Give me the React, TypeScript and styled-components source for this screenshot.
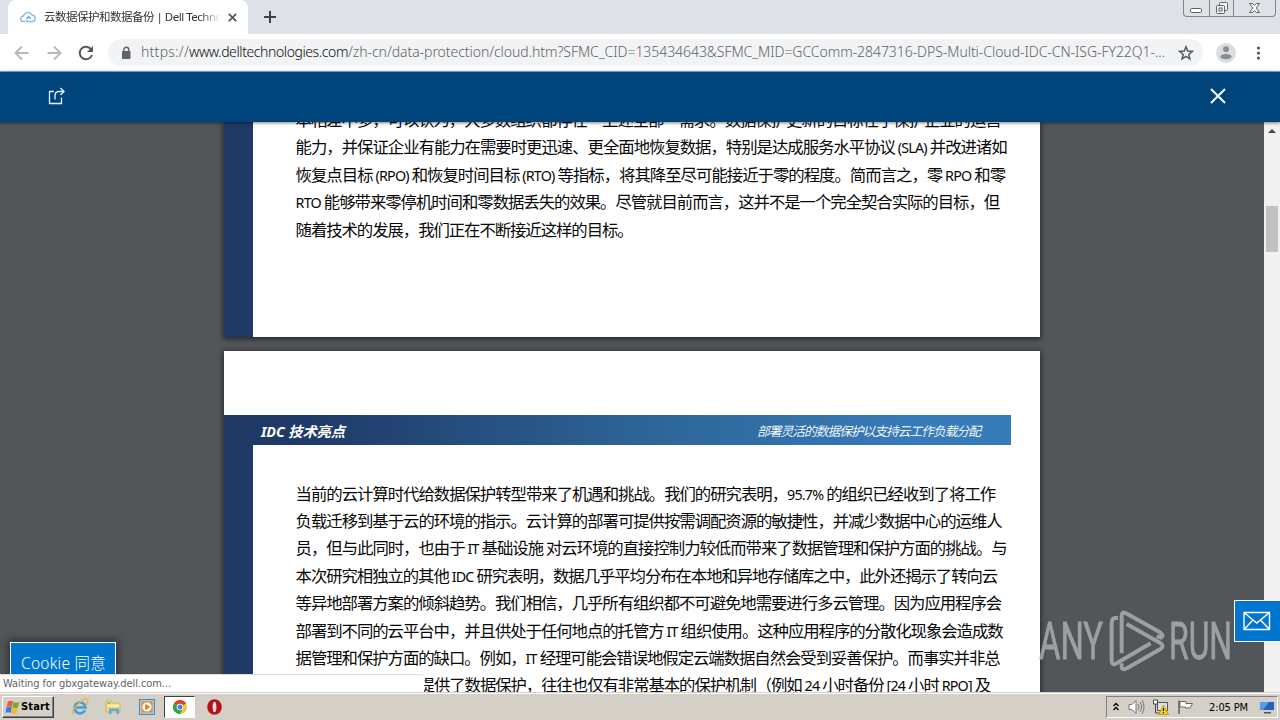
import React, { useLayoutEffect, useRef } from "react";
import styled, { createGlobalStyle } from "styled-components";

const Global = createGlobalStyle`
  * { box-sizing: border-box; }
  html, body { margin: 0; padding: 0; overflow: hidden; }
  svg { display: block; flex: none; }
`;

const cjk = `"Noto Sans CJK SC", sans-serif`;

/* ---------- text fitted to a measure ---------- */

const FitBox = styled.span`
  display: inline-block;
  white-space: pre;
`;

const LatinRun = styled.span`
  font-size: 14.3px;
  letter-spacing: -0.8px;
`;

function Fit({ width, mixed, children }: { width: number; mixed?: boolean; children: string }) {
  const ref = useRef<HTMLSpanElement>(null);
  const parts = mixed ? children.split(/([\x20-\x7e]+)/).filter(Boolean) : [children];
  const isLatin = (s: string) => /^[\x20-\x7e]+$/.test(s);
  useLayoutEffect(() => {
    const el = ref.current;
    if (!el) return;
    el.style.letterSpacing = "0px";
    const natural = el.getBoundingClientRect().width;
    const count = mixed
      ? parts.filter((p) => !isLatin(p)).join("").length
      : children.length;
    el.style.letterSpacing = `${(width - natural) / count}px`;
  }, [width, children]);
  return (
    <FitBox ref={ref}>
      {mixed ? parts.map((p, i) => (isLatin(p) ? <LatinRun key={i}>{p}</LatinRun> : p)) : children}
    </FitBox>
  );
}

/* ---------- browser chrome ---------- */

const Screen = styled.div`
  position: relative;
  width: 1280px;
  height: 720px;
  display: flex;
  flex-direction: column;
  overflow: hidden;
  font-family: "DejaVu Sans Condensed", ${cjk};
`;

const TabStrip = styled.div`
  height: 34px;
  flex: none;
  background: #dee1e6;
  display: flex;
  padding-left: 8px;
`;

const Tab = styled.div`
  width: 240px;
  height: 34px;
  background: #fff;
  border-radius: 8px 8px 0 0;
  display: flex;
  align-items: center;
  padding: 0 10px 0 12px;
`;

const TabTitle = styled.div`
  width: 177px;
  margin: 0 7px 0 8px;
  overflow: hidden;
  white-space: nowrap;
  font: 11.5px/18px "Noto Sans", ${cjk};
  color: #303236;
  mask-image: linear-gradient(90deg, #000 88%, transparent);
`;

const NewTab = styled.div`
  padding: 11px 0 0 16px;
`;

const WindowButtons = styled.div`
  margin: 0 4px 0 auto;
  width: 93px;
  height: 17px;
  display: flex;
  border: 1px solid #80858c;
  border-top: 0;
  border-radius: 0 0 4px 4px;
`;

const WindowButton = styled.div<{ $w: number }>`
  width: ${(p) => p.$w}px;
  display: flex;
  justify-content: center;
  & + & { border-left: 1px solid #80858c; }
`;

const Toolbar = styled.div`
  height: 37px;
  flex: none;
  background: #fff;
  display: flex;
  align-items: center;
  padding-left: 14px;
`;

const NavIcons = styled.div`
  display: flex;
  gap: 16px;
  width: 94px;
`;

const Omnibox = styled.div`
  width: 1095px;
  height: 27px;
  border-radius: 14px;
  background: #f1f3f4;
  display: flex;
  align-items: center;
  padding-left: 12px;
  font: 300 14px/26px "Noto Sans", ${cjk};
  color: #5f6368;
`;

const Url = styled.div`
  display: flex;
  margin: 0 13px 2px 9px;
`;

const Host = styled.span`
  color: #0c0d0f;
`;

const ToolbarEnd = styled.div`
  display: flex;
  align-items: center;
  gap: 12px;
  margin-left: 13px;
`;

/* ---------- site header and document viewer ---------- */

const SiteHeader = styled.header`
  position: relative;
  z-index: 1;
  height: 51px;
  flex: none;
  background: #00447c;
  border-top: 1px solid #6e9cbc;
  box-shadow: 0 1px 3px rgba(0, 0, 0, 0.5);
  display: flex;
  align-items: center;
  justify-content: space-between;
  padding: 0 54px 2px 48px;
`;

const Viewer = styled.main`
  height: 570px;
  flex: none;
  display: flex;
  background: #525659;
  overflow: hidden;
`;

const Pages = styled.div`
  width: 1264px;
  height: 570px;
  display: flex;
  flex-direction: column;
  gap: 14px;
  padding-left: 224px;
  overflow: hidden;
`;

const Page = styled.section<{ $h: number }>`
  width: 816px;
  height: ${(p) => p.$h}px;
  flex: none;
  background: #fff;
  box-shadow: 0 1px 5px 1px rgba(0, 0, 0, 0.55);
  display: flex;
  flex-direction: column;
`;

const PageBody = styled.div`
  flex: 1;
  min-height: 0;
  border-left: 29px solid #1f3864;
  padding-left: 42.6px;
`;

const Band = styled.div`
  margin-top: 64px;
  width: 787px;
  height: 30px;
  flex: none;
  display: flex;
  align-items: center;
  justify-content: space-between;
  padding: 0 31px 0 37px;
  background: linear-gradient(90deg, #1f3864 0%, #203b69 12%, #2e6699 55%, #377bb8 88%, #377bb8 100%);
  color: #fff;
  font-family: "Noto Sans", ${cjk};
  font-style: italic;
`;

const BandTitle = styled.div`
  font-size: 14.3px;
  line-height: 30px;
  font-weight: 700;
  padding-top: 3px;
`;

const BandNote = styled.div`
  font-size: 12.8px;
  line-height: 30px;
  font-weight: 350;
  padding-top: 1px;
`;

const Paragraph = styled.div<{ $top: number }>`
  margin-top: ${(p) => p.$top}px;
`;

const Line = styled.div<{ $indent?: number }>`
  height: 27.4px;
  padding-left: ${(p) => p.$indent ?? 0}px;
  font: 16.4px/27.4px "Noto Sans", ${cjk};
  color: #080808;
  white-space: nowrap;
`;

const ScrollTrack = styled.div`
  width: 16px;
  background: #f1f1f1;
  display: flex;
  flex-direction: column;
  align-items: center;
`;

const ScrollArrow = styled.div`
  margin-top: 7px;
  border: 4px solid transparent;
  border-top: 0;
  border-bottom: 4px solid #454545;
`;

const ScrollThumb = styled.div`
  margin-top: 73px;
  width: 12px;
  height: 46px;
  background: #c1c1c1;
`;

/* ---------- overlays ---------- */

const CookieButton = styled.div`
  position: absolute;
  left: 10px;
  top: 642px;
  width: 106px;
  height: 40px;
  border: 1px solid #fff;
  background: #0076ce;
  box-shadow: 0 0 8px 2px rgba(0, 0, 0, 0.45);
  color: #fff;
  padding-left: 10px;
  font: 300 15.5px/41px "Noto Sans", ${cjk};
`;

const StatusBubble = styled.div`
  position: absolute;
  left: 0;
  top: 674px;
  width: 424px;
  height: 18px;
  border-top: 1px solid #dcdcdc;
  border-top-right-radius: 3px;
  background: #fff;
  padding-left: 3px;
  color: #5f6368;
  font-size: 11px;
  line-height: 17px;
`;

const MailButton = styled.div`
  position: absolute;
  left: 1234px;
  top: 600px;
  width: 47px;
  height: 42px;
  border: 1px solid #fff;
  background: #0076ce;
  display: flex;
  align-items: center;
  padding-left: 8px;
`;

const Watermark = styled.svg`
  position: absolute;
  left: 1030px;
  top: 600px;
`;

/* ---------- taskbar ---------- */

const Taskbar = styled.footer`
  height: 28px;
  flex: none;
  background: #d4d0c8;
  box-shadow: inset 0 1px #d4d0c8, inset 0 2px #fff;
  display: flex;
  align-items: center;
  padding: 2px 2px 0 2px;
  z-index: 2;
`;

const StartButton = styled.div`
  width: 52px;
  height: 22px;
  border: 1px solid;
  border-color: #fff #404040 #404040 #fff;
  box-shadow: inset -1px -1px #808080;
  display: flex;
  align-items: center;
  gap: 1px;
  padding-left: 2px;
  font: 700 11px/20px "DejaVu Sans Condensed", sans-serif;
  color: #000;
`;

const TaskSlot = styled.div<{ $w: number; $on?: boolean }>`
  width: ${(p) => p.$w}px;
  height: 22px;
  display: flex;
  align-items: center;
  justify-content: center;
  ${(p) => p.$on && "background:#fff;border:1px solid;border-color:#404040 #fff #fff #404040;"}
`;

const Tray = styled.div`
  margin-left: auto;
  width: 172px;
  height: 22px;
  border: 1px solid;
  border-color: #808080 #fff #fff #808080;
  display: flex;
  align-items: center;
  padding-left: 5px;
  color: #000;
  font-size: 11px;
`;

const TrayIcons = styled.div`
  display: flex;
  align-items: center;
  gap: 7.5px;
  margin-right: 15.5px;
`;

const TrayScreen = styled.div`
  margin-left: 11px;
`;

/* ---------- icons ---------- */

const CloudIcon = () => (
  <svg width="16" height="16" viewBox="0 0 16 16" fill="none" stroke="#8fb9dc" strokeWidth="1.4">
    <path d="M5 12.5H3.4A2.7 2.7 0 0 1 3.5 7 4.6 4.6 0 0 1 12 6a3.3 3.3 0 0 1 .6 6.5H7.2L5.5 11" />
    <path d="M6.5 9.8 8.6 7.7l2 2" stroke="#5fa0d4" />
  </svg>
);

const ArrowIcon = ({ flip }: { flip?: boolean }) => (
  <svg width="16" height="16" viewBox="0 0 16 16" fill="none" stroke="#b6b8ba" strokeWidth="1.8">
    <path d={flip ? "M1.5 8h13M8 1.5 14.5 8 8 14.5" : "M14.5 8h-13M8 1.5 1.5 8 8 14.5"} />
  </svg>
);

const ReloadIcon = () => (
  <svg width="16" height="16" viewBox="0 0 16 16">
    <path d="M13.2 4.3A6.3 6.3 0 1 0 14 10" fill="none" stroke="#55585c" strokeWidth="2" />
    <path d="M15 1v6H9z" fill="#55585c" />
  </svg>
);

const FlagIcon = () => (
  <svg width="15" height="15" viewBox="0 0 14 15">
    <path d="M2.500 1.500q2.500-1.500 5 0L6.500 7Q4 5.500 1 7z" fill="#e8622a" />
    <path d="M8 2q3 1.500 5.800 0L12.500 7.300Q10 9 7 7.300z" fill="#6fae35" />
    <path d="M.8 7.600q3-1.500 5.500 0l-1 5.400q-2.500-1.500-5.300 0z" fill="#3b7fce" />
    <path d="M6.900 7.900q3 1.500 5.500 0l-1 5.400q-2.500 1.500-5.500 0z" fill="#f6b928" />
  </svg>
);

const IeIcon = () => (
  <svg width="18" height="18" viewBox="0 0 18 18" fill="none">
    <path d="M14 12.200A5.500 5.500 0 1 1 14.500 9.500H4.500" stroke="#3f9fe0" strokeWidth="2.600" />
    <path d="M3 16.500Q-.5 14 6 7T16.500 1.500q1.500 1.500-1.500 5" stroke="#e8b53a" strokeWidth="1.300" />
  </svg>
);

const FolderIcon = () => (
  <svg width="16" height="16" viewBox="0 0 16 16">
    <path d="M1 2h5l1 2h8v9H1z" fill="#f0d67c" stroke="#c9a94b" strokeWidth=".7" />
    <path d="M2 5.500h12V8H2z" fill="#faeaa8" />
    <path d="M2.500 3.500h3v1.500h-3z" fill="#7eb765" />
    <path d="M4 15V9.500h10V15h-2.500v-3h-5v3z" fill="#5ea9dc" />
  </svg>
);

const PlayerIcon = () => (
  <svg width="16" height="16" viewBox="0 0 16 16">
    <rect x=".5" y=".5" width="15" height="15" fill="#9ccbee" stroke="#4d87bd" />
    <rect x="2.500" y="2.500" width="11" height="11" fill="#f08c1e" />
    <circle cx="8" cy="8" r="4.600" fill="#fff" />
    <path d="M6.200 4.800v6.400L11.200 8z" fill="#e87511" />
  </svg>
);

const ChromeIcon = () => (
  <svg width="14" height="14" viewBox="0 0 14 14">
    <circle cx="7" cy="7" r="7" fill="#f7c928" />
    <path d="M7 7 .9 3.500A7 7 0 0 1 13.100 3.500z" fill="#e0402f" />
    <path d="M7 7 .9 3.500A7 7 0 0 0 7 14l2-3.500z" fill="#34a24c" />
    <circle cx="7" cy="7" r="3.300" fill="#fff" />
    <circle cx="7" cy="7" r="2.500" fill="#4384ee" />
  </svg>
);

const OperaIcon = () => (
  <svg width="15" height="16" viewBox="0 0 15 16">
    <ellipse cx="7.500" cy="8" rx="7.300" ry="7.800" fill="#b90f17" />
    <ellipse cx="7.500" cy="8" rx="1.900" ry="5.300" fill="#eadada" />
  </svg>
);

const TrayGlyphs = () => (
  <TrayIcons>
    <svg width="8" height="10" viewBox="0 0 8 10" fill="none" stroke="#000" strokeWidth="1.300">
      <path d="m1.500 4 2.500-2.500L6.500 4m-5 4L4 5.500 6.500 8" />
    </svg>
    <svg width="17" height="16" viewBox="0 0 17 16" fill="none" stroke="#77777a">
      <path d="M1 5.500h3l4-4v13l-4-4H1z" fill="#fff" />
      <path d="M10 5q2 3 0 6m2-8q3.500 5 0 10m2-12q4 7 0 14" />
    </svg>
    <svg width="17" height="16" viewBox="0 0 17 16">
      <path d="M5.500 3.500h10v8h-10z" fill="#dfe3e6" stroke="#555" />
      <path d="M1.500 1v4h4V1z" fill="#fff" stroke="#444" />
      <path d="M3.500 5v9h6" fill="none" stroke="#444" />
      <path d="m11.500 6 5 9.500H6.500z" fill="#f5cf18" stroke="#a18606" strokeWidth=".6" />
      <path d="M11.500 9v3m0 1v1.200" stroke="#222" strokeWidth="1.300" />
    </svg>
    <svg width="17" height="16" viewBox="0 0 17 16">
      <path d="M2 1.500v13.500" stroke="#555" strokeWidth="1.400" />
      <path d="M3 2.500h6v2h6.500l-2.500 4.500H8.500v-1H3z" fill="#fff" stroke="#666" />
    </svg>
  </TrayIcons>
);

const firstPage: [string, number][] = [
  ["本相差不多，可以认为，大多数组织都存在一上述全部一需求。数据保护更新的目标在于保护企业的运营", 705],
  ["能力，并保证企业有能力在需要时更迅速、更全面地恢复数据，特别是达成服务水平协议 (SLA) 并改进诸如", 711],
  ["恢复点目标 (RPO) 和恢复时间目标 (RTO) 等指标，将其降至尽可能接近于零的程度。简而言之，零 RPO 和零", 709.5],
  ["RTO 能够带来零停机时间和零数据丢失的效果。尽管就目前而言，这并不是一个完全契合实际的目标，但", 703.5],
  ["随着技术的发展，我们正在不断接近这样的目标。", 337],
];

const secondPage: [string, number, number?][] = [
  ["当前的云计算时代给数据保护转型带来了机遇和挑战。我们的研究表明，95.7% 的组织已经收到了将工作", 699.5],
  ["负载迁移到基于云的环境的指示。云计算的部署可提供按需调配资源的敏捷性，并减少数据中心的运维人", 706],
  ["员，但与此同时，也由于 IT 基础设施 对云环境的直接控制力较低而带来了数据管理和保护方面的挑战。与", 711],
  ["本次研究相独立的其他 IDC 研究表明，数据几乎平均分布在本地和异地存储库之中，此外还揭示了转向云", 701.5],
  ["等异地部署方案的倾斜趋势。我们相信，几乎所有组织都不可避免地需要进行多云管理。因为应用程序会", 705.5],
  ["部署到不同的云平台中，并且供处于任何地点的托管方 IT 组织使用。这种应用程序的分散化现象会造成数", 707],
  ["据管理和保护方面的缺口。例如，IT 经理可能会错误地假定云端数据自然会受到妥善保护。而事实并非总", 704],
  ["提供了数据保护，往往也仅有非常基本的保护机制（例如 24 小时备份 [24 小时 RPO] 及", 571.5, 123],
];

export default function App() {
  return (
    <Screen>
      <Global />
      <TabStrip>
        <Tab>
          <CloudIcon />
          <TabTitle>
            <Fit width={110}>云数据保护和数据备份</Fit>
            <Fit width={97}>{" | Dell Technologies"}</Fit>
          </TabTitle>
          <svg width="9" height="9" viewBox="0 0 9 9" stroke="#55585c" strokeWidth="1.8">
            <path d="m.8.8 7.400 7.400M8.200.8.8 8.200" />
          </svg>
        </Tab>
        <NewTab>
          <svg width="12" height="12" viewBox="0 0 12 12" stroke="#3f4246" strokeWidth="2">
            <path d="M6 0v12M0 6h12" />
          </svg>
        </NewTab>
        <WindowButtons>
          <WindowButton $w={25}>
            <svg width="14" height="16" viewBox="0 0 14 16" fill="#fff" stroke="#5d6268">
              <rect x="1.500" y="8.500" width="11" height="4" rx="1" />
            </svg>
          </WindowButton>
          <WindowButton $w={25}>
            <svg width="14" height="16" viewBox="0 0 14 16" fill="#f4f5f7" stroke="#5d6268">
              <rect x="4.500" y="2.500" width="8" height="8" rx="1" />
              <rect x="1.500" y="5.500" width="8" height="8" rx="1" />
              <rect x="4" y="8" width="3" height="3" />
            </svg>
          </WindowButton>
          <WindowButton $w={42}>
            <svg width="13" height="16" viewBox="0 0 13 16" fill="#fff" stroke="#5d6268">
              <path d="M1.500 3.500h3l2 2 2-2h3L8.300 8l3.200 4.500h-3l-2-2-2 2h-3L4.700 8z" />
            </svg>
          </WindowButton>
        </WindowButtons>
      </TabStrip>

      <Toolbar>
        <NavIcons>
          <ArrowIcon />
          <ArrowIcon flip />
          <ReloadIcon />
        </NavIcons>
        <Omnibox>
          <svg width="12" height="14" viewBox="0 0 12 14">
            <rect x="2" y="5" width="8.500" height="8" rx="1" fill="#5f6368" />
            <path d="M3.800 5.500V3.800a2.500 2.500 0 0 1 5 0v1.700" fill="none" stroke="#5f6368" strokeWidth="1.400" />
          </svg>
          <Url>
            <Fit width={48}>https://</Fit>
            <Host>
              <Fit width={159}>www.delltechnologies.com</Fit>
            </Host>
            <Fit width={817}>
              /zh-cn/data-protection/cloud.htm?SFMC_CID=135434643&SFMC_MID=GCComm-2847316-DPS-Multi-Cloud-IDC-CN-ISG-FY22Q1-...
            </Fit>
          </Url>
          <svg width="16" height="16" viewBox="0 0 16 16" fill="none" stroke="#55585c" strokeWidth="1.500">
            <path d="m8 1.800 1.700 4.300 4.600.3-3.500 3 1.100 4.500L8 11.400l-3.900 2.500 1.100-4.500-3.500-3 4.600-.3z" />
          </svg>
        </Omnibox>
        <ToolbarEnd>
          <svg width="20" height="20" viewBox="0 0 20 20">
            <circle cx="10" cy="10" r="10" fill="#dadce0" />
            <circle cx="10" cy="6.300" r="3" fill="#8a8d91" />
            <ellipse cx="10" cy="13.600" rx="5.600" ry="2.700" fill="#8a8d91" />
          </svg>
          <svg width="20" height="16" viewBox="0 0 20 16" fill="#55585c">
            <circle cx="10.500" cy="3" r="1.600" />
            <circle cx="10.500" cy="8" r="1.600" />
            <circle cx="10.500" cy="13" r="1.600" />
          </svg>
        </ToolbarEnd>
      </Toolbar>

      <SiteHeader>
        <svg width="18" height="18" viewBox="0 0 18 18" fill="none" stroke="#e4f3fb" strokeWidth="1.300">
          <path d="M6 4.500H1.500v12h12V10.500" />
          <path d="M7 12.500V9q0-4.500 4-4.500h4.500M12.500 1l3.500 3.500-3.500 3.500" />
        </svg>
        <svg width="16" height="16" viewBox="0 0 16 16" stroke="#fff" strokeWidth="2">
          <path d="m1 1 14 14M15 1 1 15" />
        </svg>
      </SiteHeader>

      <Viewer>
        <Pages>
          <Page $h={215}>
            <PageBody>
              <Paragraph $top={-16}>
                {firstPage.map(([text, width]) => (
                  <Line key={text}>
                    <Fit mixed width={width}>{text}</Fit>
                  </Line>
                ))}
              </Paragraph>
            </PageBody>
          </Page>
          <Page $h={420}>
            <Band>
              <BandTitle>
                <Fit width={84}>IDC 技术亮点</Fit>
              </BandTitle>
              <BandNote>
                <Fit width={223}>部署灵活的数据保护以支持云工作负载分配</Fit>
              </BandNote>
            </Band>
            <PageBody>
              <Paragraph $top={34.7}>
                {secondPage.map(([text, width, indent]) => (
                  <Line key={text} $indent={indent}>
                    <Fit mixed width={width}>{text}</Fit>
                  </Line>
                ))}
              </Paragraph>
            </PageBody>
          </Page>
        </Pages>
        <ScrollTrack>
          <ScrollArrow />
          <ScrollThumb />
        </ScrollTrack>
      </Viewer>

      <Watermark width="210" height="82" viewBox="0 0 210 82" opacity="0.75">
        <g fill="#b6b8ba" stroke="#b6b8ba" strokeWidth=".8" fontFamily="Roboto, sans-serif" fontSize="52" fontWeight="400">
          <text x="9" y="59" textLength="64" lengthAdjust="spacingAndGlyphs">ANY</text>
          <text x="139" y="59" textLength="63" lengthAdjust="spacingAndGlyphs">RUN</text>
        </g>
        <g transform="translate(0 -10) scale(.33333)" fill="none" stroke="#b6b8ba" strokeWidth="12" strokeLinejoin="round">
          <path d="M275 190V78Q275 62 288 70L390 127Q404 138 392 143L380 138" />
          <path d="M264 84H255Q245 86 245 100V214Q246 228 260 220L362 160" />
          <path d="M275 220V230Q276 243 292 234L390 178Q404 168 392 160L290 102" />
        </g>
      </Watermark>

      <CookieButton>
        <Fit width={85}>Cookie 同意</Fit>
      </CookieButton>
      <StatusBubble>
        <Fit width={168}>Waiting for gbxgateway.dell.com...</Fit>
      </StatusBubble>
      <MailButton>
        <svg width="28" height="20" viewBox="0 0 28 20" fill="none" stroke="#fff" strokeWidth="1.400">
          <path d="M1 1.500h25.500v17H1zM1 1.500 13.750 12 26.500 1.500M1 18.500l9-9.500M26.500 18.500l-9-9.500" />
        </svg>
      </MailButton>

      <Taskbar>
        <StartButton>
          <FlagIcon />
          <Fit width={29}>Start</Fit>
        </StartButton>
        <TaskSlot $w={10} />
        <TaskSlot $w={32}><IeIcon /></TaskSlot>
        <TaskSlot $w={34}><FolderIcon /></TaskSlot>
        <TaskSlot $w={34}><PlayerIcon /></TaskSlot>
        <TaskSlot $w={31} $on><ChromeIcon /></TaskSlot>
        <TaskSlot $w={38}><OperaIcon /></TaskSlot>
        <Tray>
          <TrayGlyphs />
          <Fit width={39}>2:05 PM</Fit>
          <TrayScreen>
            <svg width="16" height="14" viewBox="0 0 16 14">
              <rect x=".5" y="1.500" width="15" height="9" fill="#2461b8" stroke="#bfcde0" />
              <path d="M1 2h9L4 10H1z" fill="#5e9be0" />
              <path d="M5 12h7v1.500H5z" fill="#555" />
            </svg>
          </TrayScreen>
        </Tray>
      </Taskbar>
    </Screen>
  );
}
